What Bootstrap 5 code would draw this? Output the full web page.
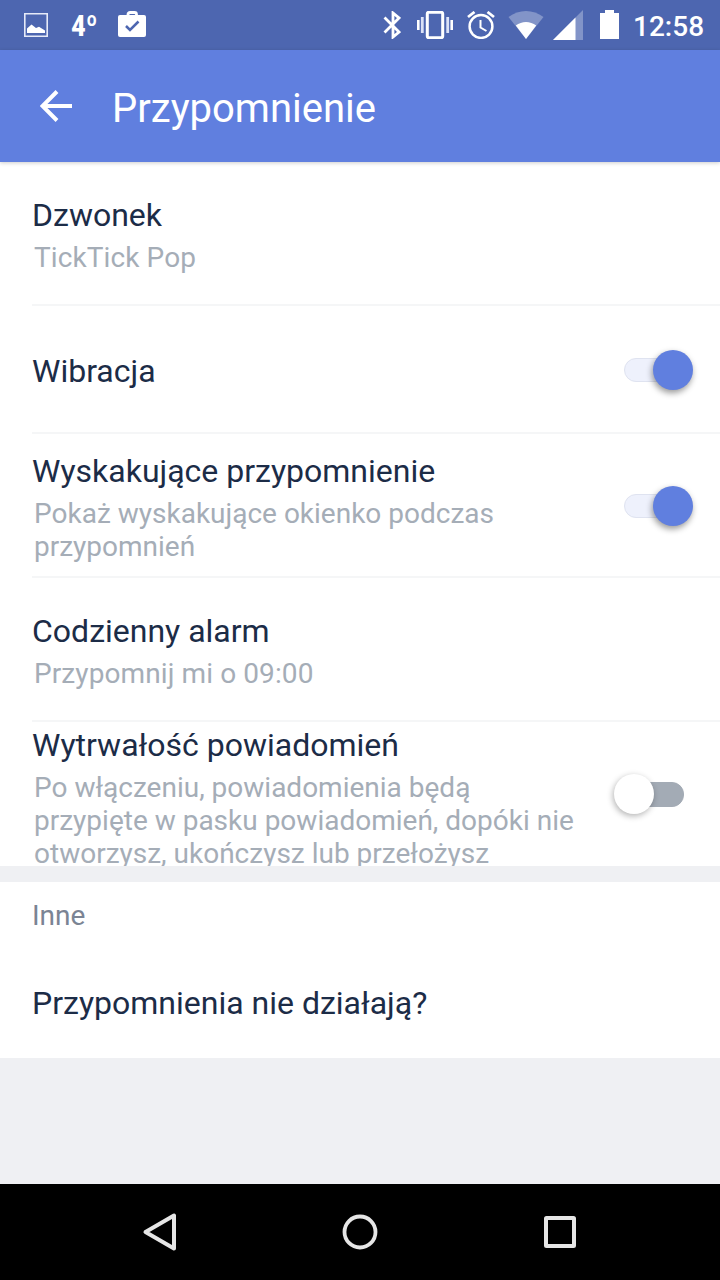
<!DOCTYPE html>
<html lang="pl">
<head>
<meta charset="utf-8">
<meta name="viewport" content="width=device-width, initial-scale=1">
<title>Przypomnienie</title>
<link href="https://cdn.jsdelivr.net/npm/bootstrap@5.3.0/dist/css/bootstrap.min.css" rel="stylesheet">
<style>
  body { font-family: Roboto, sans-serif; background: #eff0f3; height: 1280px; overflow: hidden; }
  svg { display: block; flex: none; }
  .status-bar { height: 50px; background: #4d66b0; padding: 0 16px 0 24px; }
  .temperature { width: 27px; margin: 1px 20px 0 23px; font: 700 30px/34px "Roboto Condensed", Roboto, sans-serif; white-space: nowrap; }
  .temperature span { display: inline-block; transform: scaleX(.98); transform-origin: left; }
  .clock { font-size: 28px; font-weight: 500; line-height: 34px; margin: 3px 0 0 14px; width: 71px; white-space: nowrap; }
  .alarm-icon { margin-left: 14px; }
  .wifi-icon { margin-left: 13px; }
  .signal-icon { margin-left: 9px; }
  .battery-icon { margin-left: 17px; }
  .app-bar { height: 112px; background: #607fdf; padding-left: 40px; box-shadow: 0 1px 4px rgba(0,0,0,.2); z-index: 1; }
  .app-title { font-size: 40px; line-height: 48px; font-weight: 400; margin: 5px 0 0 40px; }
  .settings .setting { height: 144px; margin-left: 32px; padding: 0; border: 0 solid #f5f6f7; border-bottom-width: 2px; color: #1c2c47; overflow: hidden; }
  .settings .setting:last-child { border-bottom-width: 0; }
  .settings .setting-short { height: 128px; }
  .setting-name { font-size: 32px; line-height: 38px; font-weight: 400; margin: 0; color: #1c2c47; }
  .setting-note { font-size: 28px; line-height: 33px; margin: 7px 0 0 2px; color: #a5adb7; }
  .single { padding-top: 34px; }
  .single .setting-note { letter-spacing: .1px; }
  .toggle { width: 70px; height: 40px; flex: none; margin: 2px 27px 0 0; }
  .toggle::before { content: ""; position: absolute; left: 1px; top: 8px; width: 60px; height: 24px; border-radius: 12px; background: #eef1fc; border: 1px solid #dfe3f0; }
  .toggle::after { content: ""; position: absolute; right: 0; top: 0; width: 40px; height: 40px; border-radius: 50%; background: #607fdf; box-shadow: -1px 3px 6px rgba(0,0,0,.4); }
  .toggle.is-off { margin: 0 36px 0 0; }
  .toggle.is-off::before { left: 10px; top: 8px; height: 25px; background: #a3abb5; border-color: #a3abb5; }
  .toggle.is-off::after { left: 0; background: #fff; box-shadow: -1px 2px 6px rgba(0,0,0,.3); }
  .others { height: 176px; margin-top: 16px; padding: 17px 32px 0; }
  .section-name { font-size: 28px; line-height: 33px; margin: 0 0 52px; color: #7b8494; }
  .nav-keys { height: 96px; padding: 0 142px; }
</style>
</head>
<body class="d-flex flex-column m-0">
<div class="status-bar d-flex align-items-center text-white">
  <svg width="24" height="24" viewBox="0 0 24 24"><path d="M.8.800h22.400v22.400H.8z" fill="none" stroke="#e6eaf8" stroke-width="1.600"/><path d="M3 20v-4.500l4.500-4 4.500 3.500 3-1.200 6 3.700V20z" fill="#fff"/></svg>
  <div class="temperature"><span>4º</span></div>
  <svg width="28" height="28" viewBox="0 0 28 28"><path d="M10 6V3.500a2 2 0 0 1 2-2h4.500a2 2 0 0 1 2 2V6" fill="none" stroke="#fff" stroke-width="2.800"/><rect y="4" width="28" height="22" rx="2" fill="#fff"/><path d="m8 15 4 4 8.500-8.500" fill="none" stroke="#4d66b0" stroke-width="2.500"/></svg>
  <div class="d-flex align-items-center ms-auto">
    <svg width="18" height="28" viewBox="0 0 18 28"><path d="m1.500 6.500 14.500 14.500L10 26V2l6 5L1.500 21.500" fill="none" stroke="#fff" stroke-width="2.800"/></svg>
    <svg class="vibrate-icon ms-3" width="36" height="28" viewBox="0 0 36 28"><rect x="10.300" y="1.300" width="15.400" height="25.400" rx="1.500" fill="none" stroke="#fff" stroke-width="3"/><path d="M5.300 6v16M30.700 6v16" stroke="#dbe2f7" stroke-width="2.800"/><path d="M1.300 9v10M34.700 9v10" stroke="#fff" stroke-width="2.600"/></svg>
    <svg class="alarm-icon" width="28" height="28" viewBox="0 0 28 28" fill="none" stroke="#fff"><circle cx="14" cy="15.500" r="11.400" stroke-width="2.500"/><path d="M13.500 9v7.500l6 3.500" stroke-width="2"/><path d="M1 6 7.500 1M27 6 20.500 1" stroke-width="2.800"/></svg>
    <svg class="wifi-icon" width="36" height="28" viewBox="0 0 36 28"><path d="M.5 6C11-2 25-2 35.500 6L18 28z" fill="#8294c8"/><path d="M7.800 14.500c6-4.700 14.400-4.700 20.400 0L18 28z" fill="#fff"/></svg>
    <svg class="signal-icon" width="30" height="30" viewBox="0 0 30 30"><path d="M30 0v30H0z" fill="#8294c8"/><path d="M22.500 7.500V30H0z" fill="#fff"/></svg>
    <svg class="battery-icon" width="19" height="30" viewBox="0 0 19 30"><path d="M5 0h9v3h5v26H0V3h5z" fill="#fff"/></svg>
    <div class="clock">12:58</div>
  </div>
</div>
<header class="app-bar position-relative d-flex align-items-center text-white">
  <svg width="32" height="32" viewBox="0 0 32 32"><path d="M32 16H3M17 1.500 2.500 16 17 30.500" fill="none" stroke="#fff" stroke-width="4"/></svg>
  <h1 class="app-title">Przypomnienie</h1>
</header>
<main class="flex-grow-1">
  <div class="settings list-group list-group-flush bg-white">
    <div class="setting list-group-item">
      <div class="single">
        <h2 class="setting-name">Dzwonek</h2>
        <p class="setting-note">TickTick Pop</p>
      </div>
    </div>
    <div class="setting setting-short list-group-item d-flex align-items-center justify-content-between">
      <h2 class="setting-name pt-1">Wibracja</h2>
      <div class="toggle position-relative"></div>
    </div>
    <div class="setting list-group-item d-flex align-items-center justify-content-between">
      <div class="pt-1">
        <h2 class="setting-name">Wyskakujące przypomnienie</h2>
        <p class="setting-note">Pokaż wyskakujące okienko podczas<br>przypomnień</p>
      </div>
      <div class="toggle position-relative"></div>
    </div>
    <div class="setting list-group-item">
      <div class="single">
        <h2 class="setting-name">Codzienny alarm</h2>
        <p class="setting-note">Przypomnij mi o 09:00</p>
      </div>
    </div>
    <div class="setting list-group-item d-flex align-items-center justify-content-between">
      <div class="align-self-start pt-1">
        <h2 class="setting-name">Wytrwałość powiadomień</h2>
        <p class="setting-note">Po włączeniu, powiadomienia będą<br>przypięte w pasku powiadomień, dopóki nie<br>otworzysz, ukończysz lub przełożysz</p>
      </div>
      <div class="toggle is-off position-relative"></div>
    </div>
  </div>
  <section class="others bg-white">
    <p class="section-name">Inne</p>
    <h2 class="setting-name">Przypomnienia nie działają?</h2>
  </section>
</main>
<footer class="nav-keys d-flex align-items-center justify-content-between bg-black">
  <svg width="36" height="40" viewBox="0 0 36 40"><path d="M3.500 20 32 3.500v33z" fill="none" stroke="#e6e6e6" stroke-width="4" stroke-linejoin="round"/></svg>
  <svg width="36" height="36" viewBox="0 0 36 36"><circle cx="18" cy="18" r="15.500" fill="none" stroke="#e6e6e6" stroke-width="3.800"/></svg>
  <svg width="36" height="36" viewBox="0 0 36 36"><rect x="4" y="4" width="28" height="28" rx=".5" fill="none" stroke="#e6e6e6" stroke-width="4" stroke-linejoin="round"/></svg>
</footer>
<script src="https://cdn.jsdelivr.net/npm/bootstrap@5.3.0/dist/js/bootstrap.bundle.min.js"></script>
</body>
</html>
